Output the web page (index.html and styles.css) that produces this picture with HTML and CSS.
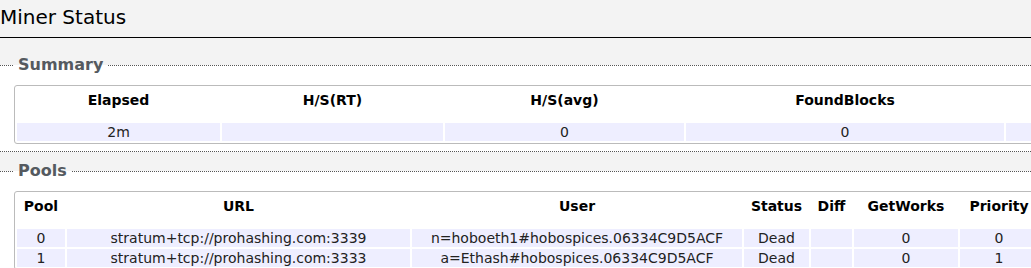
FILE: index.html
```html
<!DOCTYPE html>
<html lang="en">
<head>
  <meta charset="UTF-8" />
  <title>Miner Status</title>
  <link rel="stylesheet" href="styles.css">
</head>
<body>
  <h2 class="page-title">Miner Status</h2>

  <fieldset class="cbi-section">
    <legend>Summary</legend>
    <div class="section-node">
      <table class="cbi-table">
        <thead>
          <tr>
            <th class="w-elapsed">Elapsed</th>
            <th class="w-hsrt">H/S(RT)</th>
            <th class="w-hsavg">H/S(avg)</th>
            <th class="w-found">FoundBlocks</th>
            <th class="w-more"></th>
          </tr>
        </thead>
        <tbody>
          <tr>
            <td>2m</td>
            <td></td>
            <td>0</td>
            <td>0</td>
            <td></td>
          </tr>
        </tbody>
      </table>
    </div>
  </fieldset>

  <fieldset class="cbi-section pools">
    <legend>Pools</legend>
    <div class="section-node">
      <table class="cbi-table">
        <thead>
          <tr>
            <th class="w-pool">Pool</th>
            <th class="w-url">URL</th>
            <th class="w-user">User</th>
            <th class="w-status">Status</th>
            <th class="w-diff">Diff</th>
            <th class="w-getworks">GetWorks</th>
            <th class="w-priority">Priority</th>
          </tr>
        </thead>
        <tbody>
          <tr>
            <td>0</td>
            <td>stratum+tcp://prohashing.com:3339</td>
            <td>n=hoboeth1#hobospices.06334C9D5ACF</td>
            <td>Dead</td>
            <td></td>
            <td>0</td>
            <td>0</td>
          </tr>
          <tr>
            <td>1</td>
            <td>stratum+tcp://prohashing.com:3333</td>
            <td>a=Ethash#hobospices.06334C9D5ACF</td>
            <td>Dead</td>
            <td></td>
            <td>0</td>
            <td>1</td>
          </tr>
        </tbody>
      </table>
    </div>
  </fieldset>
</body>
</html>
```

FILE: styles.css
```css
html, body {
  overflow: hidden;
}
body {
  margin: 0;
  background-color: #f3f3f3;
  font-family: "DejaVu Sans", Verdana, sans-serif;
  font-size: 14px;
  color: #222;
}
.page-title {
  margin: 0;
  padding: 5px 0 8px;
  font-size: 20px;
  font-weight: normal;
  line-height: 24px;
  color: #000;
  border-bottom: 1px solid #000;
}
.cbi-section {
  margin: 17px 0 0;
  padding: 10px 14px 7px;
  border: none;
  border-top: 1px dotted #555;
  border-bottom: 1px dotted #555;
  background-color: #fff;
}
.pools {
  margin-top: 9px;
}
legend {
  padding: 0 4px;
  font-size: 16px;
  font-weight: bold;
  line-height: 20px;
  color: #555a60;
}
.section-node {
  width: max-content;
  border: 1px solid #bbb;
  border-radius: 3px;
}
.cbi-table {
  table-layout: fixed;
  border-spacing: 2px;
}
th {
  padding: 4px 0 13px;
  line-height: 16px;
  font-weight: bold;
  color: #000;
  text-align: center;
  white-space: nowrap;
}
td {
  padding: 0;
  height: 18px;
  line-height: 18px;
  text-align: center;
  background-color: #eeeeff;
  white-space: nowrap;
}
.w-elapsed { width: 203px; }
.w-hsrt { width: 221px; }
.w-hsavg { width: 239px; }
.w-found { width: 318px; }
.w-more { width: 120px; }
.w-pool { width: 48px; }
.w-url { width: 343px; }
.w-user { width: 330px; }
.w-status { width: 65px; }
.w-diff { width: 41px; }
.w-getworks { width: 104px; }
.w-priority { width: 78px; }
```
